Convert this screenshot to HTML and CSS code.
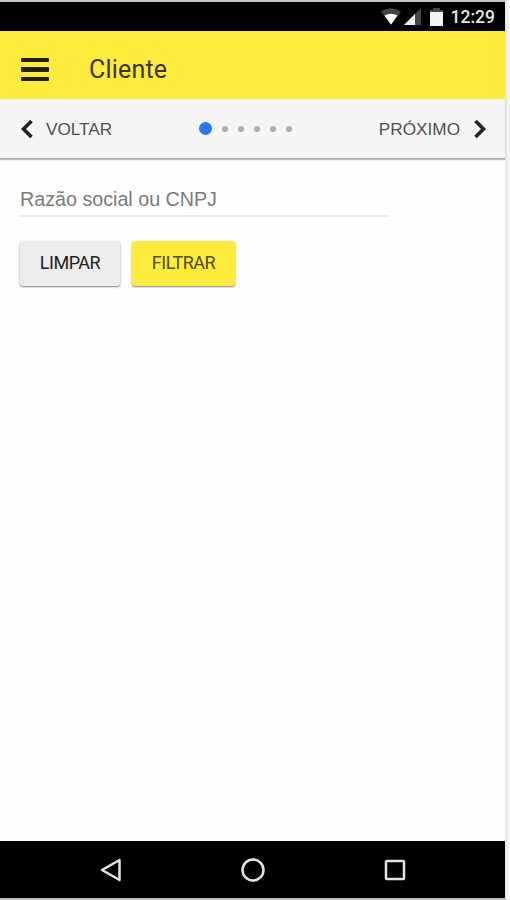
FILE: index.html
```html
<!DOCTYPE html>
<html lang="pt-BR">
<head>
  <meta charset="UTF-8" />
  <meta name="viewport" content="width=device-width, initial-scale=1.0" />
  <title>Cliente</title>
  <link rel="stylesheet" href="styles.css">
</head>
<body>
  <div class="phone">

    <!-- Status bar -->
    <div class="status-bar">
      <svg class="wifi" width="20" height="17" viewBox="0 0 20 17">
        <path d="M0 3.500Q10-3 20 3.500L10 17Z" fill="#444" />
        <path d="M3.500 7.500Q10 4 16.500 7.500L10 16.500Z" fill="#fff" />
      </svg>
      <svg class="signal" width="17" height="17" viewBox="0 0 17 17">
        <path d="M17 0V17H0Z" fill="#484848" />
        <path d="M11 6V17H0Z" fill="#eee" />
      </svg>
      <svg class="battery" width="13" height="18" viewBox="0 0 13 18">
        <path d="M0 2H3V0H10V2H13V5H0Z" fill="#4a4a4a" />
        <path d="M0 4H13V18H0Z" fill="#f4f4f4" />
      </svg>
      <span class="clock">12:29</span>
    </div>

    <!-- Toolbar -->
    <header class="toolbar">
      <button class="menu-button" aria-label="Menu">
        <span></span>
        <span></span>
        <span></span>
      </button>
      <h1 class="title">Cliente</h1>
    </header>

    <!-- Stepper -->
    <div class="stepper">
      <button class="step-button">
        <svg width="12" height="20" viewBox="0 0 12 20">
          <path d="M10.500 2L2.500 10L10.500 18" />
        </svg>
        <span>VOLTAR</span>
      </button>
      <div class="dots">
        <span class="dot active"></span>
        <span class="dot"></span>
        <span class="dot"></span>
        <span class="dot"></span>
        <span class="dot"></span>
        <span class="dot"></span>
      </div>
      <button class="step-button next">
        <span>PRÓXIMO</span>
        <svg width="12" height="20" viewBox="0 0 12 20">
          <path d="M1.500 2L9.500 10L1.500 18" />
        </svg>
      </button>
    </div>

    <!-- Filter form -->
    <main class="content">
      <input class="search" type="text" placeholder="Razão social ou CNPJ" />
      <div class="actions">
        <button class="btn">LIMPAR</button>
        <button class="btn btn-primary">FILTRAR</button>
      </div>
    </main>

    <!-- Android navigation -->
    <nav class="nav-bar">
      <svg width="24" height="26" viewBox="0 0 24 26">
        <path d="M20.500 3V23L3 13Z" />
      </svg>
      <svg width="24" height="26" viewBox="0 0 24 26">
        <circle cx="12" cy="13" r="10.500" />
      </svg>
      <svg width="24" height="26" viewBox="0 0 24 26">
        <rect x="3" y="4" width="18" height="18" rx="0.500" />
      </svg>
    </nav>
  </div>
</body>
</html>
```

FILE: styles.css
```css
* {
  box-sizing: border-box;
}

body {
  margin: 0;
  height: 900px;
  background: #f3f3f3;
  overflow: hidden;
}

button {
  border: none;
  padding: 0;
  background: none;
  cursor: pointer;
}

.phone {
  display: flex;
  flex-direction: column;
  width: 507px;
  height: 900px;
  border-top: 2px solid #c8c8c8;
  border-right: 2px solid #e8e8e8;
  border-bottom: 2px solid #bdbdbd;
  background: #fefefe;
}

/* Status bar */
.status-bar {
  display: flex;
  align-items: center;
  justify-content: flex-end;
  height: 29px;
  padding-right: 10px;
  background: #000;
}

.signal {
  margin-left: 3px;
}

.battery {
  margin-left: 9px;
}

.clock {
  margin-left: 8px;
  padding-top: 2px;
  color: #e6e6e6;
  font: 500 17.5px/27px Roboto, sans-serif;
}

/* Toolbar */
.toolbar {
  display: flex;
  align-items: center;
  height: 68px;
  padding: 9px 21px 0;
  background: #ffeb3b;
}

.menu-button {
  display: flex;
  flex-direction: column;
  gap: 5px;
  width: 28px;
}

.menu-button span {
  height: 4.5px;
  border-radius: 1px;
  background: #211e14;
}

.title {
  margin: 0 0 0 40px;
  color: #3a350f;
  font: 400 25px/30px Roboto, sans-serif;
  letter-spacing: 0.2px;
}

/* Stepper */
.stepper {
  display: flex;
  align-items: center;
  height: 60px;
  padding: 0 19px 0 21px;
  background: #f5f5f5;
  border-bottom: 1px solid #a8a8a8;
  box-shadow: 0 1px 1px rgba(0, 0, 0, 0.25);
}

.step-button {
  display: flex;
  align-items: center;
  gap: 13px;
  color: #505050;
  font: 17.2px/20px "Liberation Sans", Arial, sans-serif;
}

.step-button.next {
  gap: 14px;
  margin-left: auto;
}

.step-button svg {
  fill: none;
  stroke: #222;
  stroke-width: 3.6;
}

.dots {
  display: flex;
  align-items: center;
  gap: 10px;
  margin-left: 87px;
}

.dot {
  width: 6px;
  height: 6px;
  border-radius: 50%;
  background: #adadad;
}

.dot.active {
  width: 13px;
  height: 13px;
  background: #2378fb;
}

/* Content */
.content {
  flex: 1;
  padding: 25px 20px;
}

.search {
  display: block;
  width: 368px;
  height: 33px;
  padding: 0;
  border: none;
  border-bottom: 2px solid #e9e9e9;
  outline: none;
  background: transparent;
  font: 19.7px/24px "Liberation Sans", Arial, sans-serif;
}

.search::placeholder {
  color: #7b7b7b;
}

.actions {
  display: flex;
  gap: 12px;
  margin-top: 24px;
}

.btn {
  width: 100px;
  height: 45px;
  padding-bottom: 1px;
  border-radius: 3px;
  background: #ececec;
  box-shadow: 0 1px 2px rgba(0, 0, 0, 0.5);
  color: #222;
  font: 400 18px/44px Roboto, sans-serif;
  letter-spacing: -0.5px;
}

.btn-primary {
  width: 103px;
  background: #ffeb3b;
  color: #504a17;
}

/* Android navigation */
.nav-bar {
  display: flex;
  align-items: center;
  justify-content: space-between;
  height: 57px;
  padding: 0 98px 0 99px;
  background: #000;
}

.nav-bar svg {
  fill: none;
  stroke: #e4e4e4;
  stroke-width: 2.5;
  stroke-linejoin: round;
}
```
